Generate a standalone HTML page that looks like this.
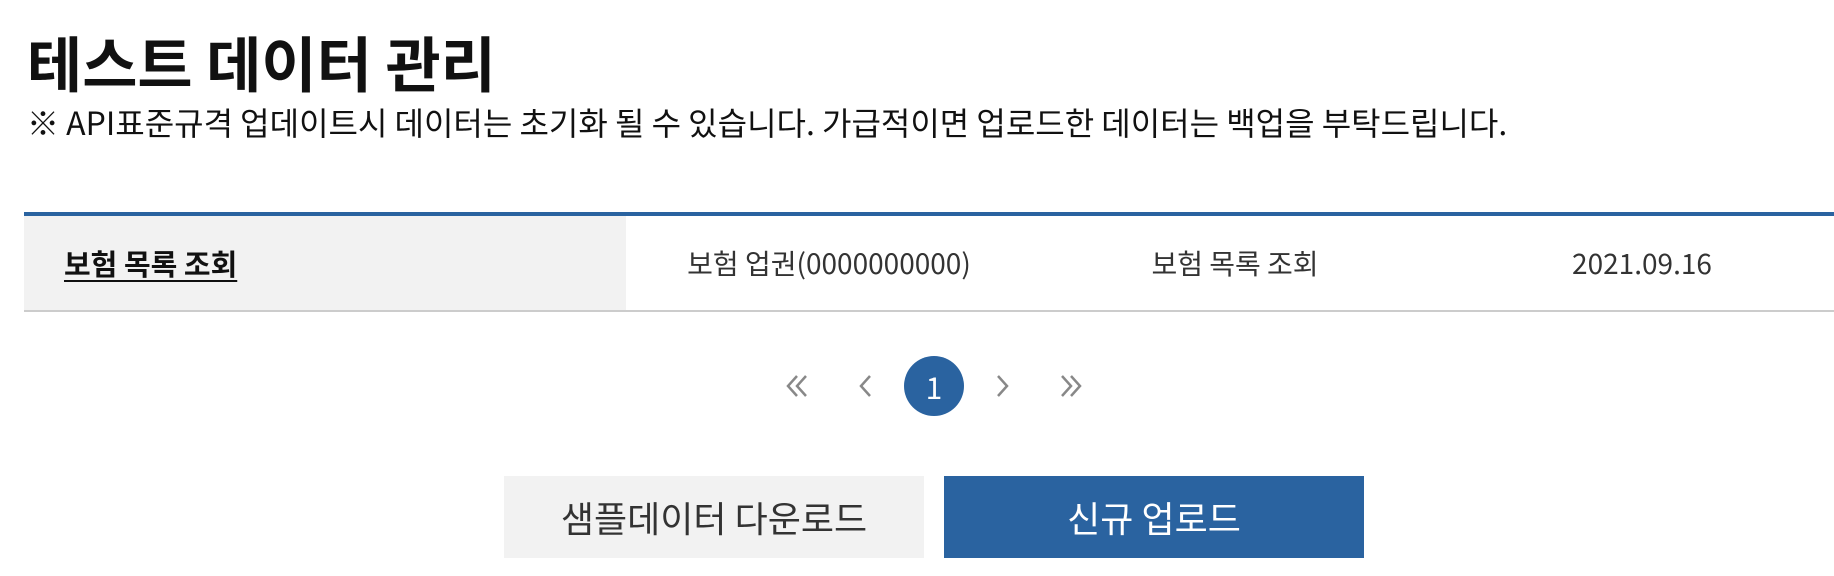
<!DOCTYPE html>
<html><head><meta charset="utf-8"><style>
*{margin:0;padding:0;box-sizing:border-box}
body{width:1834px;height:576px;background:#fff;font-family:"Liberation Sans","Noto Sans CJK KR",sans-serif;position:relative;overflow:hidden;color:#111}
.t{position:absolute;white-space:nowrap}
h1{position:absolute;left:27px;top:22px;font-size:60px;font-weight:700;line-height:80px;color:#111;font-family:"Noto Sans CJK KR",sans-serif;white-space:nowrap}
.sub{left:27px;top:100px;font-size:32px;line-height:44px;color:#111;font-family:"Noto Sans CJK KR",sans-serif}
.bar{position:absolute;left:24px;right:0;top:212px;height:4px;background:#2a63a0}
.row{position:absolute;left:24px;right:0;top:216px;height:96px;border-bottom:2px solid #cccccc}
.c1{position:absolute;left:0;top:0;width:602px;height:94px;background:#f2f2f2}
.cell{position:absolute;top:216px;height:94px;line-height:94px;font-size:28px;color:#333;font-family:"Noto Sans CJK KR",sans-serif;white-space:nowrap;transform:translateX(-50%)}
.u{left:64px;transform:none;color:#111;font-weight:700;font-size:29px;text-decoration:underline;text-underline-offset:5px}
.pg{position:absolute;top:375px}
.cur{position:absolute;left:904px;top:356px;width:60px;height:60px;border-radius:50%;background:#2a63a0;color:#fff;text-align:center;line-height:60px;font-size:30px;font-family:"Noto Sans CJK KR",sans-serif}
.btn{position:absolute;top:476px;height:82px;width:420px;text-align:center;line-height:82px;font-size:36px;font-family:"Noto Sans CJK KR",sans-serif}
</style></head><body>
<h1>테스트 데이터 관리</h1>
<div class="t sub">※ API표준규격 업데이트시 데이터는 초기화 될 수 있습니다. 가급적이면 업로드한 데이터는 백업을 부탁드립니다.</div>
<div class="bar"></div>
<div class="row"><div class="c1"></div></div>
<div class="cell u">보험 목록 조회</div>
<div class="cell" style="left:829px">보험 업권(0000000000)</div>
<div class="cell" style="left:1235px">보험 목록 조회</div>
<div class="cell" style="left:1642px">2021.09.16</div>
<svg class="pg" style="left:786px" width="24" height="22" viewBox="0 0 24 22"><polyline points="11,1 2,11 11,21" fill="none" stroke="#888" stroke-width="2.5"/><polyline points="20,1 11,11 20,21" fill="none" stroke="#888" stroke-width="2.5"/></svg>
<svg class="pg" style="left:859px" width="14" height="22" viewBox="0 0 14 22"><polyline points="11,1 2,11 11,21" fill="none" stroke="#888" stroke-width="2.5"/></svg>
<div class="cur">1</div>
<svg class="pg" style="left:995px" width="14" height="22" viewBox="0 0 14 22"><polyline points="3,1 12,11 3,21" fill="none" stroke="#888" stroke-width="2.5"/></svg>
<svg class="pg" style="left:1058px" width="24" height="22" viewBox="0 0 24 22"><polyline points="4,1 13,11 4,21" fill="none" stroke="#888" stroke-width="2.5"/><polyline points="13,1 22,11 13,21" fill="none" stroke="#888" stroke-width="2.5"/></svg>
<div class="btn" style="left:504px;background:#f2f2f2;color:#333">샘플데이터 다운로드</div>
<div class="btn" style="left:944px;background:#2a63a0;color:#fff">신규 업로드</div>
</body></html>
